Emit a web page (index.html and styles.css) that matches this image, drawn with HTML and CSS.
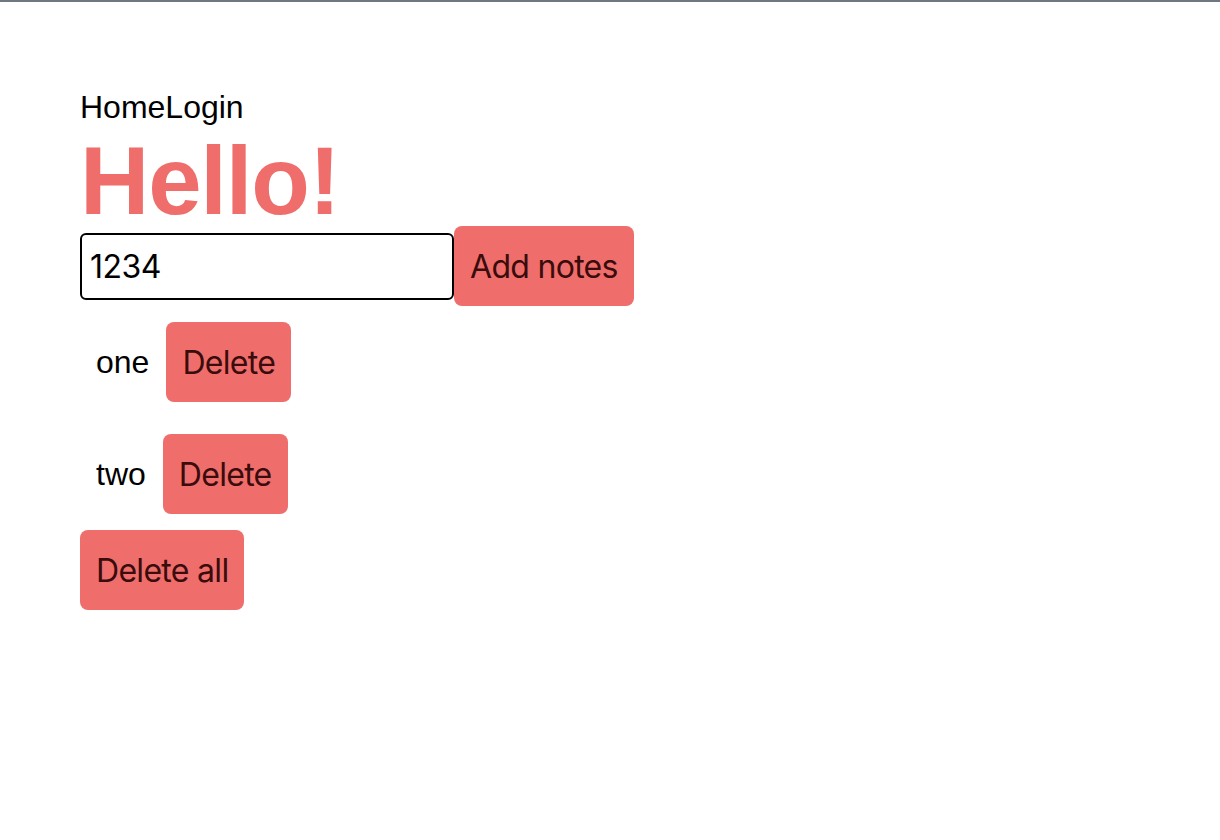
FILE: index.html
```html
<!DOCTYPE html>
<html lang="en">
<head>
<meta charset="utf-8">
<title>Notes</title>
<link rel="stylesheet" href="styles.css">
</head>
<body>
<div class="page">
  <nav class="nav"><a class="nav-link">Home</a><a class="nav-link">Login</a></nav>
  <h1 class="title">Hello!</h1>
  <div class="add-row">
    <input class="note-input" type="text" value="1234">
    <button class="btn">Add notes</button>
  </div>
  <ul class="notes">
    <li class="note"><span class="note-text">one</span><button class="btn">Delete</button></li>
    <li class="note"><span class="note-text">two</span><button class="btn">Delete</button></li>
  </ul>
  <button class="btn">Delete all</button>
</div>
</body>
</html>
```
FILE: styles.css
```css
html, body {
  margin: 0;
  padding: 0;
  background: #ffffff;
}
body {
  border-top: 2px solid #6f7880;
  font-family: "Liberation Sans", Arial, sans-serif;
  color: #000;
}
.page {
  padding: 87px 80px 0 80px;
}
.nav {
  display: flex;
  font-size: 32px;
  line-height: 36px;
  height: 36px;
}
.nav-link {
  color: #000;
  text-decoration: none;
}
.title {
  margin: 11px 0 0 0;
  font-size: 96px;
  line-height: 90px;
  font-weight: 700;
  color: #ef6e6b;
  letter-spacing: -1.2px;
}
.add-row {
  display: flex;
  align-items: center;
  height: 80px;
}
.note-input {
  box-sizing: border-box;
  width: 374px;
  height: 67px;
  border: 2px solid #000;
  border-radius: 6px;
  padding: 0 8px;
  font-family: Inter, "Liberation Sans", sans-serif;
  font-size: 32px;
  letter-spacing: -0.5px;
  color: #000;
  outline: none;
  margin: 0;
}
.btn {
  box-sizing: border-box;
  height: 80px;
  padding: 0 16px;
  border: none;
  border-radius: 8px;
  background: #ef6e6b;
  color: #3a0c0c;
  font-family: Inter, "Liberation Sans", sans-serif;
  font-size: 32px;
  letter-spacing: -0.7px;
  margin: 0;
}
.notes {
  list-style: none;
  margin: 0;
  padding: 0;
}
.note {
  display: flex;
  align-items: center;
  gap: 17px;
  padding: 16px;
}
.note-text {
  font-size: 32px;
}
```
